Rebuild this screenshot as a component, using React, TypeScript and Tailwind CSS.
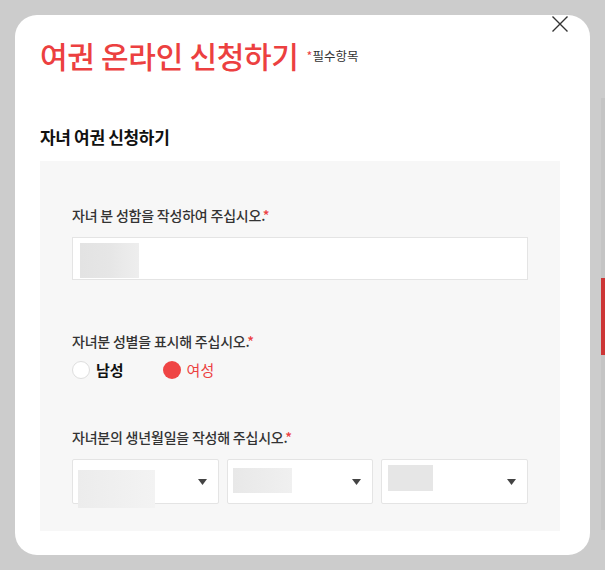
import React from "react";

const FONT = { fontFamily: '"Noto Sans CJK KR", "Noto Sans", sans-serif' };

function Label({ children }: { children: React.ReactNode }) {
  return (
    <p className="text-[14px] leading-[20px] font-medium text-[#333] tracking-[-0.015em]">
      {children}
      <span className="text-[#ec4040]">*</span>
    </p>
  );
}

function Caret() {
  return (
    <svg width="9" height="6" viewBox="0 0 9 6" className="shrink-0">
      <path d="M0 0H9L4.5 6Z" fill="#444" />
    </svg>
  );
}

function SelectBox({ blob }: { blob: string }) {
  return (
    <div className="relative flex-1 h-[45px] bg-white border border-[#e4e4e4] rounded-[2px] flex items-center justify-end pr-[11px]">
      <div className={blob} />
      <Caret />
    </div>
  );
}

export default function App() {
  return (
    <div className="relative w-[605px] h-[570px] bg-[#cccccc] overflow-hidden" style={FONT}>
      <div className="relative ml-[15px] mt-[15px] w-[575px] h-[540px] bg-white rounded-[22px] px-[25px] pt-[22px]">
        <button aria-label="닫기" className="absolute right-[22px] top-[1px] w-[16px] h-[16px]">
          <svg width="16" height="16" viewBox="0 0 16 16">
            <path d="M0.5 0.5L15.5 15.5M15.5 0.5L0.5 15.5" stroke="#333" strokeWidth="1.4" />
          </svg>
        </button>

        <div className="flex items-center gap-[8px]">
          <h1 className="text-[30px] leading-[36px] font-medium text-[#ec4040] tracking-[-0.01em]">
            여권 온라인 신청하기
          </h1>
          <span className="text-[12.5px] leading-[16px] text-[#333] mt-[2px]">
            <span className="text-[#ec4040]">*</span>필수항목
          </span>
        </div>

        <h2 className="mt-[52px] text-[17px] leading-[24px] font-bold text-[#111] tracking-[-0.02em]">
          자녀 여권 신청하기
        </h2>

        <div className="mt-[12px] w-[520px] bg-[#f7f7f7] px-[32px] pt-[44px] pb-[27px]">
          <Label>자녀 분 성함을 작성하여 주십시오.</Label>
          <div className="relative mt-[12px] h-[43px] bg-white border border-[#e4e4e4]">
            <div className="absolute left-[7px] top-[5px] w-[59px] h-[35px] bg-gradient-to-r from-[#e3e3e3] via-[#e6e6e6] to-[#eeeeee]" />
          </div>

          <div className="mt-[51px]">
            <Label>자녀분 성별을 표시해 주십시오.</Label>
          </div>
          <div className="mt-[9px] flex items-center h-[20px]">
            <label className="flex items-center gap-[6px]">
              <span className="w-[18px] h-[18px] rounded-full bg-white border border-[#dedede]" />
              <span className="text-[15px] leading-[20px] font-bold text-[#111]">남성</span>
            </label>
            <label className="ml-[39px] flex items-center gap-[6px]">
              <span className="w-[18px] h-[18px] rounded-full bg-[#ef4444]" />
              <span className="text-[15px] leading-[20px] text-[#ec4040]">여성</span>
            </label>
          </div>

          <div className="mt-[47px]">
            <Label>자녀분의 생년월일을 작성해 주십시오.</Label>
          </div>
          <div className="mt-[12px] flex gap-[8px]">
            <SelectBox blob="absolute left-[5px] top-[10px] w-[77px] h-[38px] bg-gradient-to-r from-[#ececec] to-[#f3f3f3]" />
            <SelectBox blob="absolute left-[5px] top-[8px] w-[59px] h-[25px] bg-gradient-to-r from-[#e8e8e8] to-[#f0f0f0]" />
            <SelectBox blob="absolute left-[6px] top-[5px] w-[45px] h-[26px] bg-[#e6e6e6]" />
          </div>
        </div>
      </div>

      <div className="absolute right-0 top-[98px] w-[4px] h-[432px] bg-[#c4c4c4]">
        <div className="mt-[180px] h-[77px] bg-[#cc3535]" />
      </div>
    </div>
  );
}
